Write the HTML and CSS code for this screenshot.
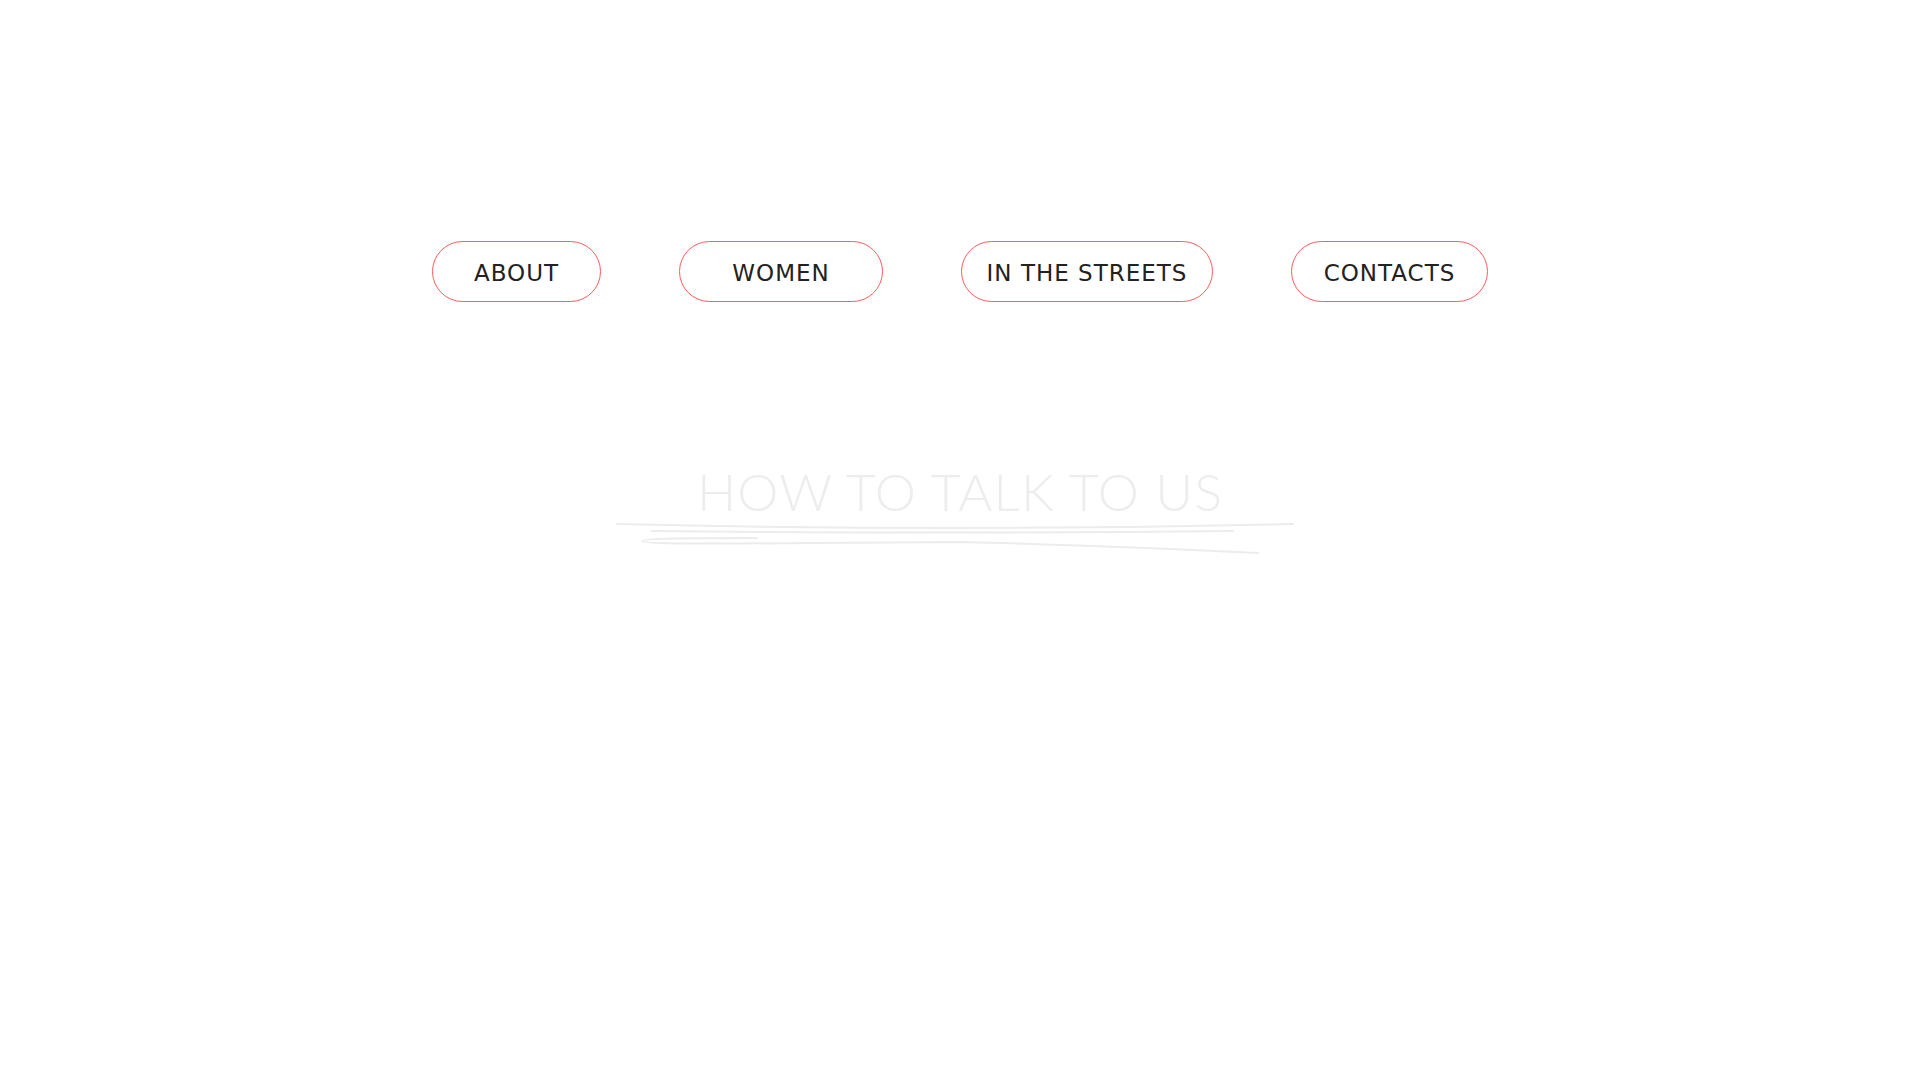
FILE: index.html
```html
<!DOCTYPE html>
<html lang="en">
<head>
<meta charset="utf-8">
<title>How to talk to us</title>
<link rel="stylesheet" href="styles.css">
</head>
<body>
<nav class="menu">
  <a class="pill pill-about" href="#">ABOUT</a>
  <a class="pill pill-women" href="#">WOMEN</a>
  <a class="pill pill-streets" href="#">IN THE STREETS</a>
  <a class="pill pill-contacts" href="#">CONTACTS</a>
</nav>
<section class="talk">
  <h1 class="talk-title">HOW TO TALK TO US</h1>
  <svg class="scribble" width="680" height="38" viewBox="0 0 680 38" aria-hidden="true">
    <path d="M2,4 Q340,12 678,4" />
    <path d="M37,11 Q330,14 618,11" />
    <path d="M142,18 C80,18 27,18 27,21 C27,24 80,24 200,23 L347,22 Q500,26 643,33" />
  </svg>
</section>
</body>
</html>
```
FILE: styles.css
```css
html, body {
  margin: 0;
  padding: 0;
  background: #ffffff;
}
body {
  font-family: "DejaVu Sans", "Noto Sans", sans-serif;
  min-height: 1078px;
}
.menu {
  display: flex;
  justify-content: center;
  gap: 78px;
  padding-top: 241px;
}
.pill {
  box-sizing: border-box;
  height: 61px;
  border: 1px solid #ff5c5c;
  border-radius: 31px;
  display: flex;
  align-items: center;
  justify-content: center;
  color: #222222;
  text-decoration: none;
  font-size: 23px;
  letter-spacing: 1px;
  padding-top: 2px;
}
.pill-about { width: 169px; }
.pill-women { width: 204px; }
.pill-streets { width: 252px; }
.pill-contacts { width: 197px; }

.talk {
  display: flex;
  flex-direction: column;
  align-items: center;
  padding-top: 163px;
}
.talk-title {
  margin: 0;
  font-family: "Lato", "Open Sans", sans-serif;
  font-weight: 300;
  font-size: 52px;
  line-height: 52px;
  color: #ededed;
  letter-spacing: 1.1px;
}
.scribble {
  display: block;
  margin-top: 3px;
  margin-right: 10px;
  fill: none;
  stroke: #ececec;
  stroke-width: 2;
  stroke-linecap: round;
}
```
